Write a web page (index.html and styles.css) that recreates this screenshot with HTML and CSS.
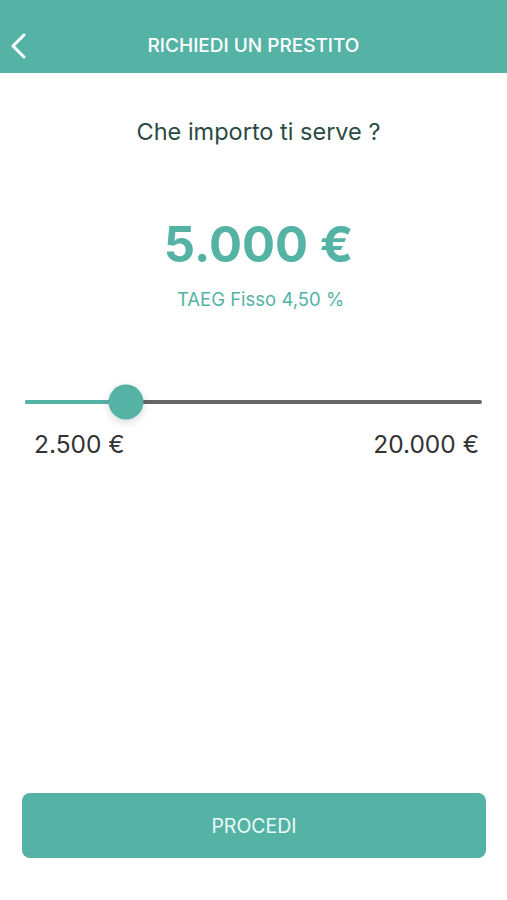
FILE: index.html
```html
<!DOCTYPE html>
<html lang="it">
<head>
  <meta charset="UTF-8">
  <title>Richiedi un prestito</title>
  <link rel="stylesheet" href="styles.css">
</head>
<body>

<div class="screen">
  <header class="topbar">
    <a class="back" href="#">
      <svg width="18" height="26" viewBox="0 0 18 26"><path d="M14 2 L3 13 L14 24" fill="none" stroke="#fff" stroke-width="3" stroke-linecap="round" stroke-linejoin="round"/></svg>
    </a>
    <h1>RICHIEDI UN PRESTITO</h1>
  </header>

  <section class="amount">
    <h2>Che importo ti serve ?</h2>
    <div class="value">5.000 €</div>
    <div class="rate">TAEG Fisso 4,50 %</div>
  </section>

  <section class="slider">
    <div class="track">
      <div class="fill" style="width: 22%"></div>
      <div class="thumb" style="left: 22%"></div>
    </div>
    <div class="limits">
      <span>2.500 €</span>
      <span>20.000 €</span>
    </div>
  </section>

  <div class="actions">
    <button class="proceed">PROCEDI</button>
  </div>
</div>

</body>
</html>
```

FILE: styles.css
```css
body {
  margin: 0;
  font-family: Inter, 'Noto Sans', sans-serif;
  background: #fff;
}
.screen {
  height: 900px;
  display: flex;
  flex-direction: column;
}
.topbar {
  height: 73px;
  background: #55b3a6;
  display: flex;
  align-items: center;
  justify-content: center;
  position: relative;
  padding-top: 18px;
  box-sizing: border-box;
}
.topbar h1 {
  margin: 0;
  color: #fff;
  font-size: 19px;
  font-weight: 500;
}
.back {
  position: absolute;
  left: 10px;
  top: 33px;
  display: flex;
}
.amount {
  text-align: center;
  padding: 44px 0 0 10px;
}
.amount h2 {
  margin: 0;
  font-size: 23.5px;
  font-weight: 400;
  color: #2c4a44;
}
.value {
  margin-top: 74px;
  font-size: 49px;
  font-weight: 700;
  color: #55b3a6;
  line-height: 1;
}
.rate {
  margin-top: 19px;
  padding-left: 4px;
  font-size: 18.5px;
  color: #55b3a6;
}
.slider {
  padding: 0 25px;
  margin-top: 90px;
}
.track {
  position: relative;
  height: 4px;
  border-radius: 2px;
  background: #666;
}
.fill {
  height: 100%;
  background: #55b3a6;
  border-radius: 2px;
}
.thumb {
  position: absolute;
  top: 50%;
  width: 35px;
  height: 35px;
  border-radius: 50%;
  background: #55b3a6;
  transform: translate(-50%, -50%);
  box-shadow: 0 3px 8px rgba(0,0,0,0.15);
}
.limits {
  display: flex;
  justify-content: space-between;
  margin-top: 25px;
  padding: 0 3px 0 9px;
  font-size: 24.5px;
  color: #333;
}
.actions {
  margin-top: auto;
  padding: 0 21px 42px 22px;
}
.proceed {
  width: 100%;
  height: 65px;
  border: none;
  border-radius: 8px;
  background: #55b3a6;
  color: #eafaf6;
  font-family: inherit;
  font-size: 19.5px;
}
```
